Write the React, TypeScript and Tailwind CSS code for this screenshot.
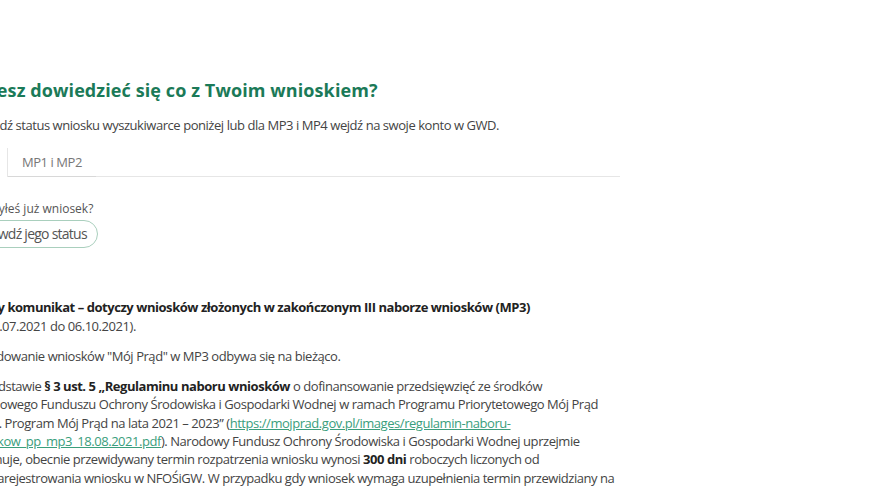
import React from 'react';

const App = () => {
  return (
    <div className="w-[880px] h-[488px] overflow-hidden bg-white" style={{ fontFamily: '"Open Sans", "Liberation Sans", sans-serif' }}>
      <div className="-ml-[36px] w-[656px] pt-[77px] text-[13px] leading-[18.3px] text-[#444] tracking-[-0.45px]">
        <h2 className="text-[18px] leading-[26px] font-bold text-[#1b7a58] tracking-[0.1px]">Chcesz dowiedzieć się co z Twoim wnioskiem?</h2>
        <p className="mt-[13px]">Sprawdź status wniosku wyszukiwarce poniżej lub dla MP3 i MP4 wejdź na swoje konto w GWD.</p>

        {/* tabs */}
        <div className="mt-[14px] flex border-b border-[#e6e6e6]">
          <div className="h-[29px] w-[44px] border-r border-[#e6e6e6] bg-white -mb-px"></div>
          <div className="h-[29px] px-[14px] flex items-center text-[#777] border-b border-[#d8d8d8] -mb-px">MP1 i MP2</div>
        </div>

        <div className="pl-[12px]">
          <p className="mt-[25px] text-[12px] leading-[14px] text-[#555] tracking-[0px]">Złożyłeś już wniosek?</p>
          <button className="mt-[4px] -ml-[16px] h-[28px] px-[10px] rounded-full border border-[#a9cfbd] text-[14px] text-[#555] tracking-[-0.75px] flex items-center">Sprawdź jego status</button>
        </div>

        <div className="mt-[50px] space-y-[12px]">
          <p>
            <strong className="text-[#222]">Ważny komunikat – dotyczy wniosków złożonych w zakończonym III naborze wniosków (MP3)</strong>
            <br />
            (od 01.07.2021 do 06.10.2021).
          </p>
          <p>Procedowanie wniosków "Mój Prąd" w MP3 odbywa się na bieżąco.</p>
          <p>
            Na podstawie <strong className="text-[#222]">§ 3 ust. 5 „Regulaminu naboru wniosków</strong> o dofinansowanie przedsięwzięć ze środków
            <br />
            Narodowego Funduszu Ochrony Środowiska i Gospodarki Wodnej w ramach Programu Priorytetowego Mój Prąd
            <br />
            (2021). Program Mój Prąd na lata 2021 – 2023” (<a className="text-[#3a9e7c] underline">https://mojprad.gov.pl/images/regulamin-naboru-</a>
            <br />
            <a className="text-[#3a9e7c] underline">wnioskow_pp_mp3_18.08.2021.pdf</a>). Narodowy Fundusz Ochrony Środowiska i Gospodarki Wodnej uprzejmie
            <br />
            informuje, obecnie przewidywany termin rozpatrzenia wniosku wynosi <strong className="text-[#222]">300 dni</strong> roboczych liczonych od
            <br />
            dnia zarejestrowania wniosku w NFOŚiGW. W przypadku gdy wniosek wymaga uzupełnienia termin przewidziany na
            <br />
            jego rozpatrzenie ulega wydłużeniu o czas potrzebny na uzupełnienie.
          </p>
        </div>
      </div>
    </div>
  );
};

export default App;
